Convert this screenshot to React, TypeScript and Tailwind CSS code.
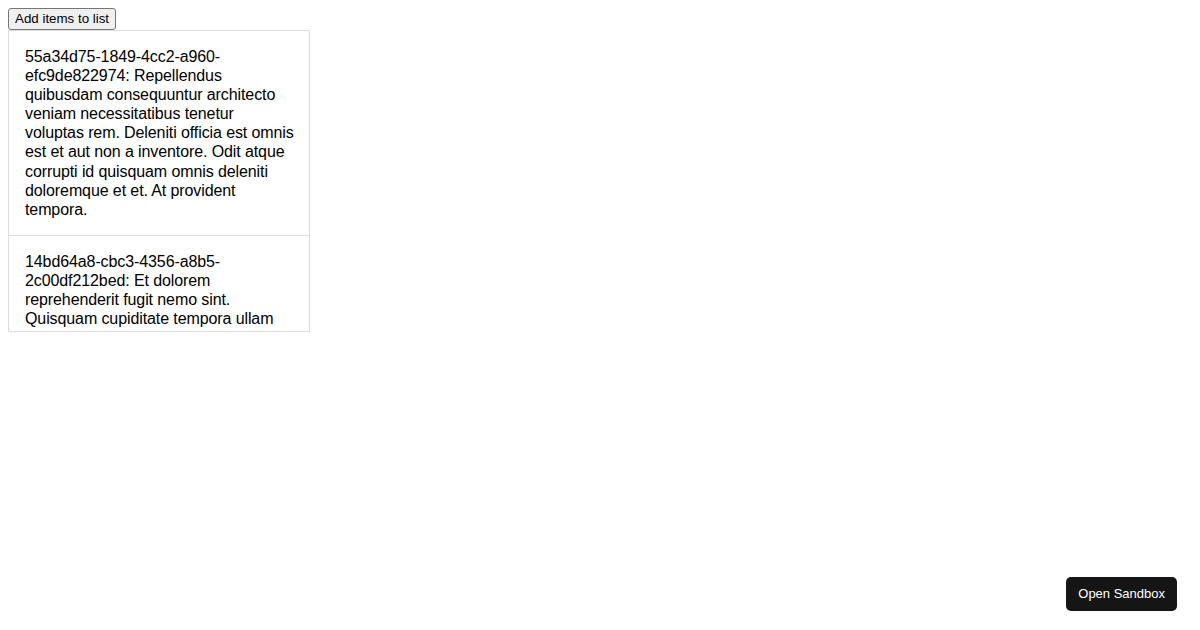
import { useState } from "react";

const seed = [
  {
    id: "55a34d75-1849-4cc2-a960-efc9de822974",
    text: "Repellendus quibusdam consequuntur architecto veniam necessitatibus tenetur voluptas rem. Deleniti officia est omnis est et aut non a inventore. Odit atque corrupti id quisquam omnis deleniti doloremque et et. At provident tempora.",
  },
  {
    id: "14bd64a8-cbc3-4356-a8b5-2c00df212bed",
    text: "Et dolorem reprehenderit fugit nemo sint. Quisquam cupiditate tempora ullam aut quia dolores accusamus voluptatem deleniti. Aut ut quo in eos et voluptas.",
  },
];

export default function App() {
  const [items] = useState(seed);

  return (
    <div className="min-h-[630px] bg-white p-2 font-['Liberation_Sans',Arial,sans-serif] text-black">
      <button className="block rounded-[3px] border border-[#767676] bg-[#efefef] px-[6px] py-[1px] text-[13.33px] leading-[18px] hover:bg-[#e5e5e5]">
        Add items to list
      </button>
      <div className="h-[302px] w-[302px] overflow-hidden border border-[#dddddd]">
        {items.map((item) => (
          <div key={item.id} className="border-b border-[#dddddd] py-4 pl-4 pr-[14px] text-base leading-[19.1px] tracking-[-0.1px]">
            {item.id}: {item.text}
          </div>
        ))}
      </div>
      <button className="fixed bottom-[19px] right-[23px] rounded-[5px] bg-[#151515] px-[12px] py-[8px] text-[13px] leading-[18px] text-white">
        Open Sandbox
      </button>
    </div>
  );
}
